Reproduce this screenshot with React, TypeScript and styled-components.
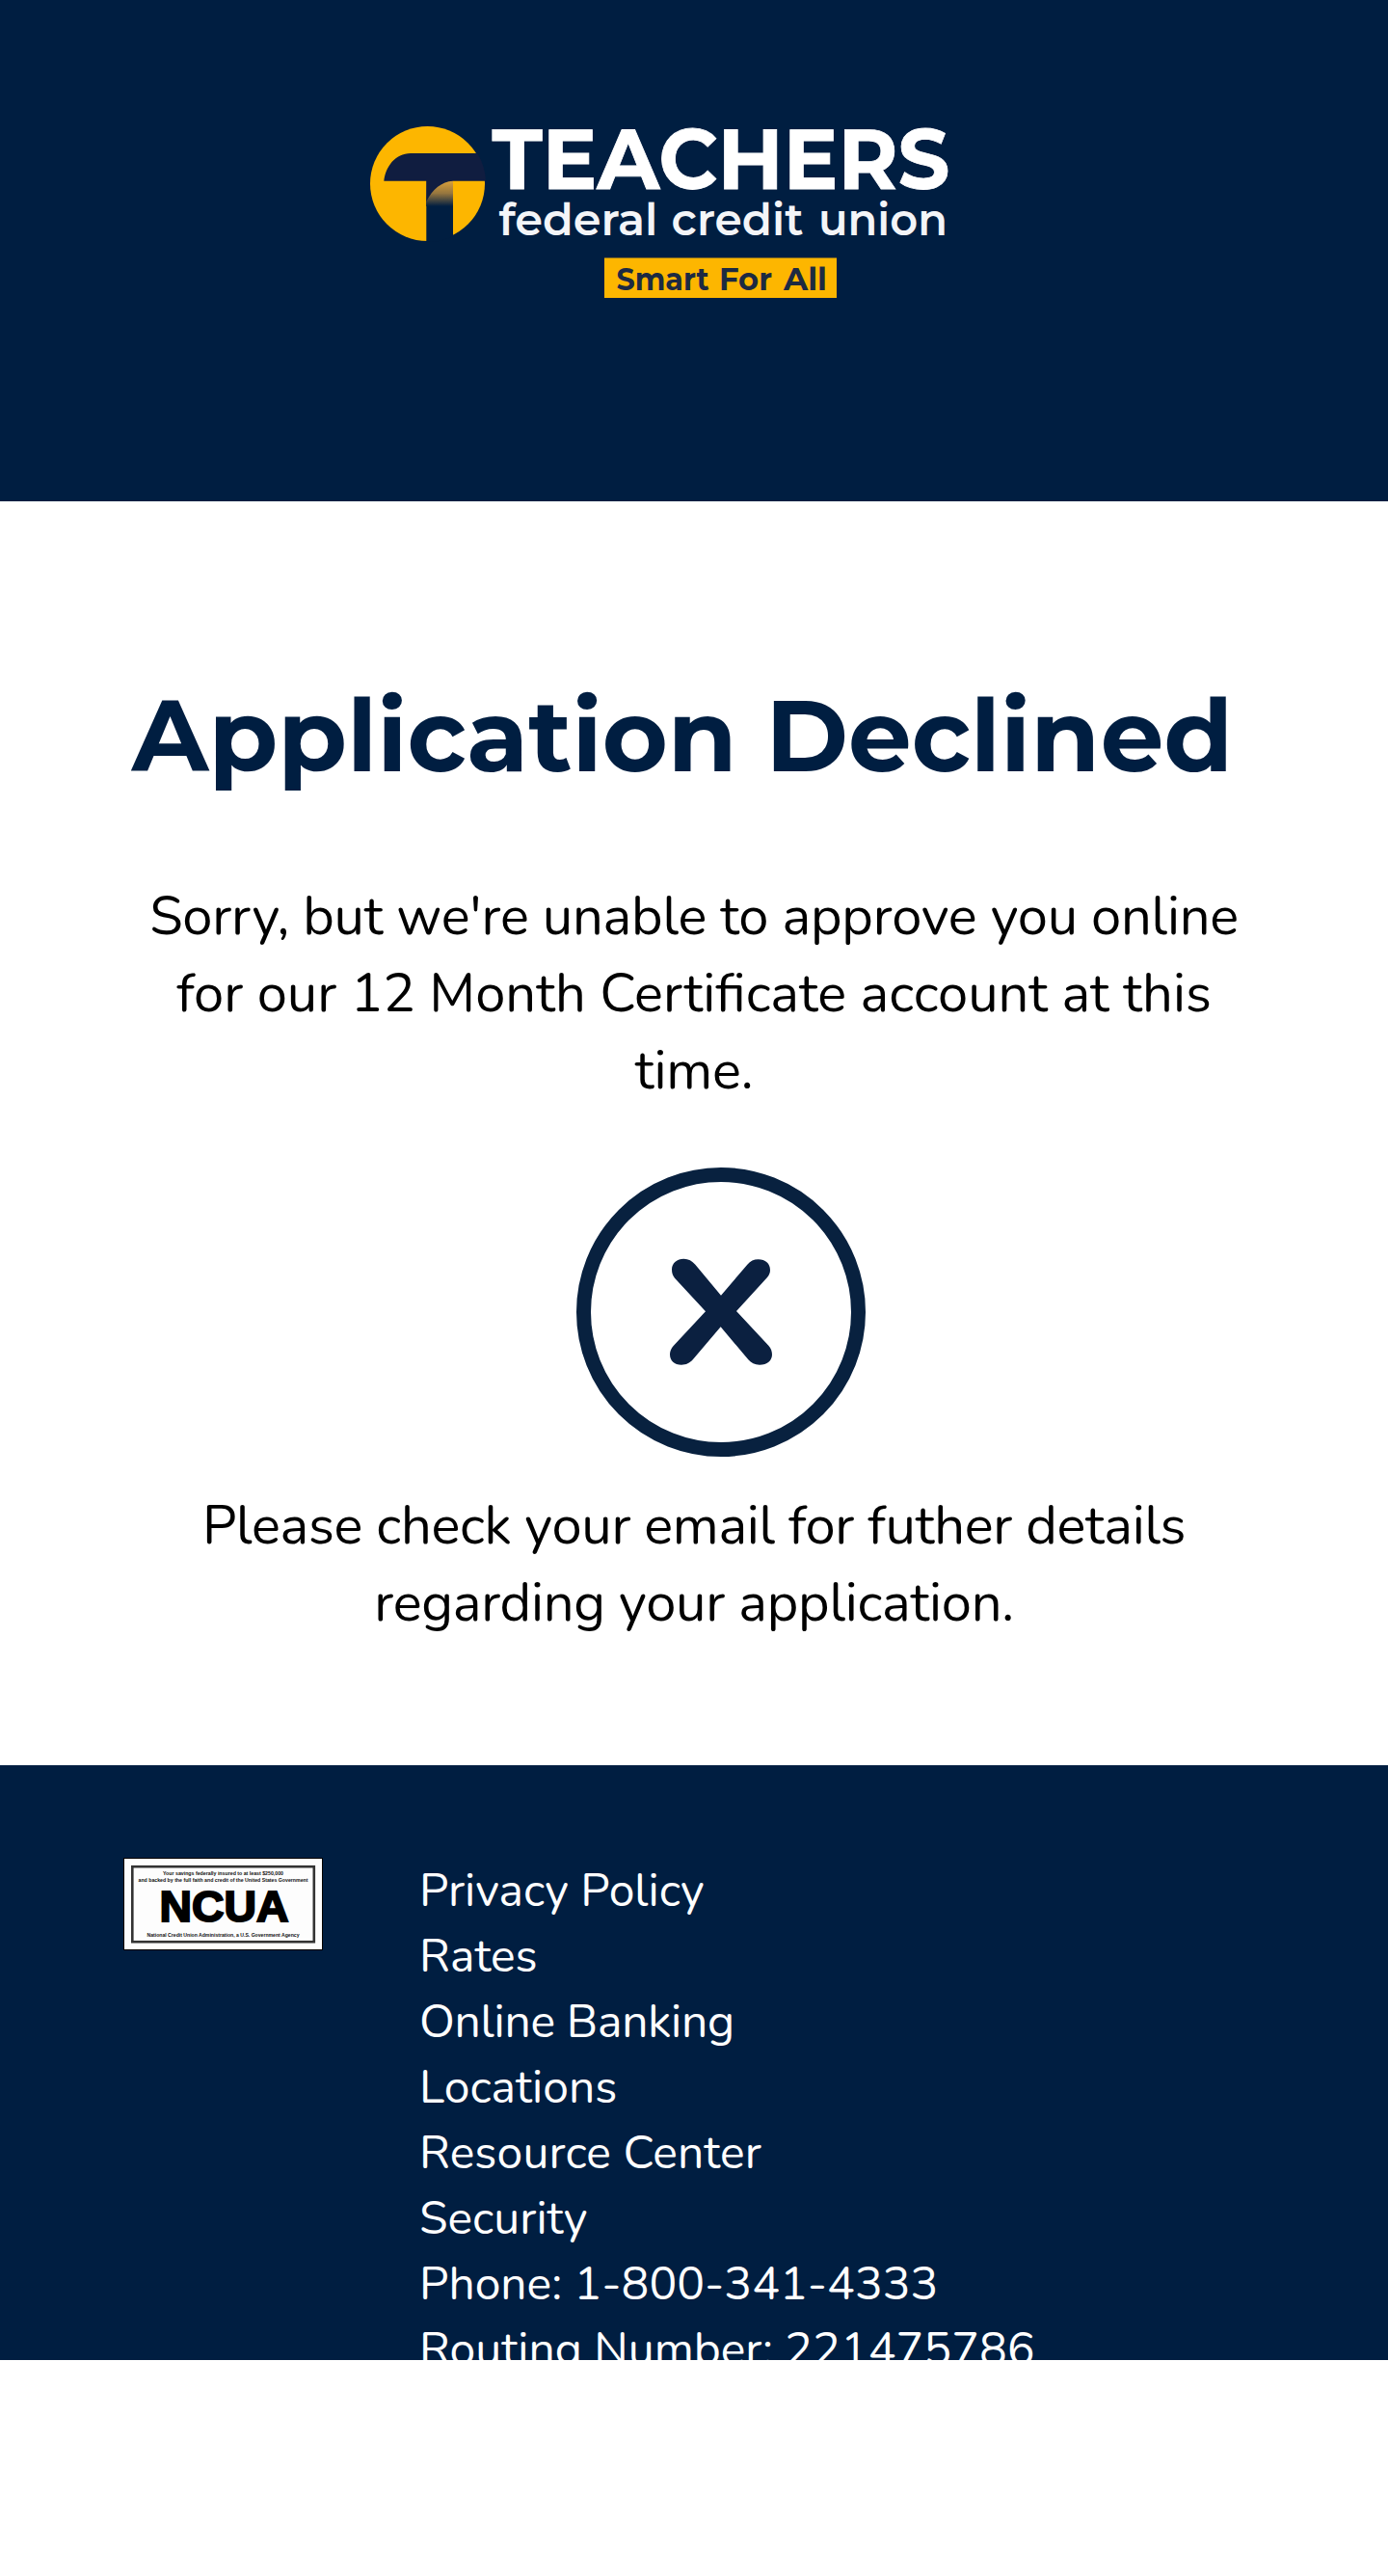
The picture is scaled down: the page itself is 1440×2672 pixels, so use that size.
import React from "react";
import styled, { createGlobalStyle } from "styled-components";

const navy = "#001e41";
const bodyFont = `Nunito, Lato, "Open Sans", sans-serif`;
const displayFont = `Montserrat, Inter, "Liberation Sans", sans-serif`;

const GlobalStyle = createGlobalStyle`
  html, body { margin: 0; padding: 0; background: #fff; }
  *, *::before, *::after { box-sizing: border-box; }
`;

const Page = styled.div`
  display: flex;
  flex-direction: column;
  width: 1440px;
  height: 2672px;
  overflow: hidden;
  background: #fff;
  font-family: ${bodyFont};
`;

const Header = styled.header`
  height: 520px;
  padding: 131px 0 0 384px;
  background: ${navy};
`;

const Logo = styled.svg`
  display: block;
  width: 600px;
  height: 178px;
`;

const Main = styled.main`
  display: flex;
  flex-direction: column;
  align-items: center;
  height: 1311px;
  padding-top: 179px;
`;

const Title = styled.h1`
  margin: 0 24px 0 0;
  height: 128px;
  line-height: 128px;
  font-family: ${displayFont};
  font-size: 104px;
  font-weight: 700;
  white-space: nowrap;
  color: ${navy};
`;

const Message = styled.p<{ $top: number }>`
  width: 1184px;
  margin: ${(p) => p.$top}px 0 0;
  font-size: 56px;
  line-height: 80px;
  text-align: center;
  color: #000;
`;

const Line = styled.span<{ $tracking?: string }>`
  display: block;
  white-space: nowrap;
  letter-spacing: ${(p) => p.$tracking ?? "normal"};
`;

const DeclinedIcon = styled.svg`
  display: block;
  flex: none;
  width: 300px;
  height: 300px;
  margin: 60px 0 0 56px;
`;

const Footer = styled.footer`
  display: flex;
  align-items: flex-start;
  gap: 100px;
  height: 617px;
  padding: 96px 0 0 128px;
  overflow: hidden;
  background: ${navy};
`;

const Badge = styled.svg`
  display: block;
  flex: none;
  width: 207px;
  height: 96px;
`;

const LinkList = styled.ul`
  display: flex;
  flex-direction: column;
  margin: 0;
  padding: 0;
  list-style: none;
  font-size: 48px;
  line-height: 68px;
  color: #fff;
`;

const LinkItem = styled.li`
  height: 68px;
`;

const links: { label: string; tracking?: string }[] = [
  { label: "Privacy Policy" },
  { label: "Rates" },
  { label: "Online Banking", tracking: "-0.25px" },
  { label: "Locations" },
  { label: "Resource Center", tracking: "0.13px" },
  { label: "Security" },
  { label: "Phone: 1-800-341-4333" },
  { label: "Routing Number: 221475786" },
];

function TeachersLogo() {
  return (
    <Logo viewBox="0 0 600 178" role="img" aria-label="Teachers Federal Credit Union">
      <defs>
        <linearGradient id="stemFade" x1="0" y1="0" x2="0" y2="1">
          <stop offset="0" stopColor="#dca23a" />
          <stop offset="0.5" stopColor="#96763f" />
          <stop offset="1" stopColor={navy} />
        </linearGradient>
        <clipPath id="disc">
          <circle cx="59.5" cy="59.5" r="60.5" />
        </clipPath>
      </defs>
      <circle cx="59.5" cy="59.5" r="59.5" fill="#fdb600" />
      <g clipPath="url(#disc)">
        <rect x="58.3" y="56" width="27.7" height="70" fill={navy} />
        <rect x="58.3" y="56" width="27.7" height="27" fill="url(#stemFade)" />
        <path
          d="M14.3 56.7C16 42 26 28 42 28H122V56.7H86C74 57.5 65 65 58.3 78V56.7Z"
          fill="#101d40"
        />
      </g>
      <g fill="#fff" fontFamily={displayFont} lengthAdjust="spacingAndGlyphs">
        <text
          x="126.5"
          y="64.7"
          fontSize="88"
          fontWeight="700"
          stroke="#fff"
          strokeWidth="0.8"
          textLength="475"
          lengthAdjust="spacingAndGlyphs"
        >
          TEACHERS
        </text>
        <text y="113" fontSize="46" fontWeight="600" fill="#f4f5f8">
          <tspan x="133.5" textLength="165" lengthAdjust="spacingAndGlyphs">federal</tspan>{" "}
          <tspan x="312.5" textLength="137" lengthAdjust="spacingAndGlyphs">credit</tspan>{" "}
          <tspan x="465" textLength="134" lengthAdjust="spacingAndGlyphs">union</tspan>
        </text>
      </g>
      <rect x="243" y="136.5" width="241" height="41.5" fill="#fdb600" />
      <text y="170" fontFamily={displayFont} fontSize="33" fontWeight="700" fill="#1d2a42">
        <tspan x="255.5" textLength="96" lengthAdjust="spacingAndGlyphs">Smart</tspan>{" "}
        <tspan x="362" textLength="55" lengthAdjust="spacingAndGlyphs">For</tspan>{" "}
        <tspan x="429" textLength="45" lengthAdjust="spacingAndGlyphs">All</tspan>
      </text>
    </Logo>
  );
}

function NcuaBadge() {
  return (
    <Badge viewBox="0 0 207 96" role="img" aria-label="NCUA">
      <rect x="0.5" y="0.5" width="206" height="95" fill="#fdfdfd" stroke="#000" />
      <rect x="9.3" y="9.2" width="188.5" height="78" fill="none" stroke="#333" strokeWidth="2.6" />
      <g fontFamily={`"Liberation Sans", Arial, sans-serif`} fontWeight="700" fill="#111">
        <text x="41" y="18.2" fontSize="5.8" textLength="125" lengthAdjust="spacingAndGlyphs">
          Your savings federally insured to at least $250,000
        </text>
        <text x="15.5" y="24.8" fontSize="5.8" textLength="176" lengthAdjust="spacingAndGlyphs">
          and backed by the full faith and credit of the United States Government
        </text>
        <text
          x="37.5"
          y="66.3"
          fontSize="44.5"
          fill="#000"
          stroke="#000"
          strokeWidth="2"
          textLength="134"
          lengthAdjust="spacingAndGlyphs"
        >
          NCUA
        </text>
        <text x="24.5" y="81.5" fontSize="5.8" textLength="158" lengthAdjust="spacingAndGlyphs">
          National Credit Union Administration, a U.S. Government Agency
        </text>
      </g>
    </Badge>
  );
}

export default function App() {
  return (
    <Page>
      <GlobalStyle />
      <Header>
        <TeachersLogo />
      </Header>
      <Main>
        <Title>Application Declined</Title>
        <Message $top={84}>
          <Line $tracking="-0.23px">Sorry, but we're unable to approve you online</Line>
          <Line>for our 12 Month Certificate account at this</Line>
          <Line $tracking="-0.2px">time.</Line>
        </Message>
        <DeclinedIcon viewBox="0 0 300 300">
          <circle cx="150" cy="150" r="142.5" fill="none" stroke="#08213f" strokeWidth="15" />
          <path
            transform="translate(-18 -21) scale(0.33333)"
            fill="#0b2040"
            d="M351 380C351 360 368 347 388 347C403 347 414 353 424 365L504 461L586 365C596 354 606 349 620 349C642 349 657 362 657 382C657 391 654 398 648 405L552 510L652 617C660 626 663 635 663 645C663 664 648 677 624 677C609 677 598 671 589 661L503 559L417 660C406 672 396 677 381 677C359 677 345 664 345 644C345 635 349 626 356 618L456 511L360 407C354 400 351 391 351 380Z"
          />
        </DeclinedIcon>
        <Message $top={32}>
          <Line $tracking="-0.3px">Please check your email for futher details</Line>
          <Line $tracking="-0.25px">regarding your application.</Line>
        </Message>
      </Main>
      <Footer>
        <NcuaBadge />
        <LinkList>
          {links.map(({ label, tracking }) => (
            <LinkItem key={label}>
              <Line $tracking={tracking}>{label}</Line>
            </LinkItem>
          ))}
        </LinkList>
      </Footer>
    </Page>
  );
}
